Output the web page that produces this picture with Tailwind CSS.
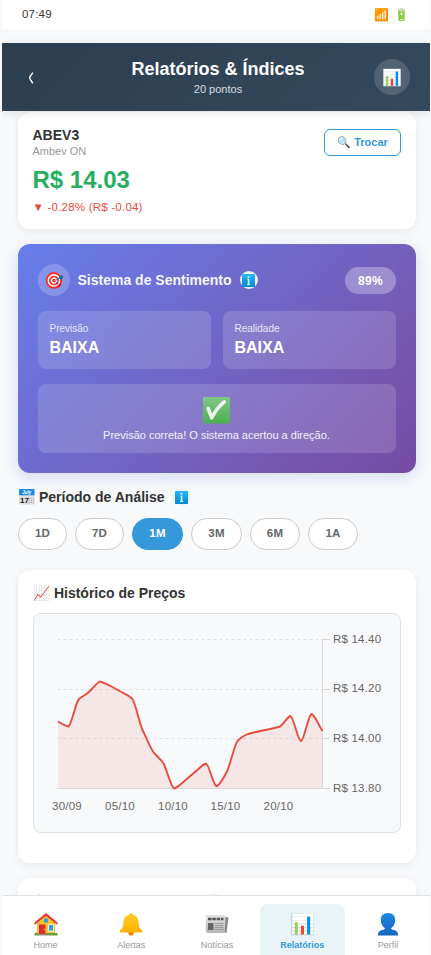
<!DOCTYPE html>
<html lang="pt-BR">
<head>
<meta charset="utf-8">
<meta name="viewport" content="width=device-width, initial-scale=1">
<title>Relatórios &amp; Índices</title>
<script src="https://cdn.jsdelivr.net/npm/@tailwindcss/browser@4"></script>
</head>
<body class="h-[955px] overflow-hidden bg-[#f8f9fb] font-['Liberation_Sans',Arial,sans-serif] text-[#333]">
<svg class="absolute" width="0" height="0" aria-hidden="true">
  <defs>
    <linearGradient id="infoFill" x1="0" y1="0" x2="0" y2="1"><stop offset="0" stop-color="#29b6f6"/><stop offset="1" stop-color="#0288d1"/></linearGradient>
    <linearGradient id="bellFill" x1="0" y1="0" x2="0" y2="1"><stop offset="0" stop-color="#ffca28"/><stop offset="1" stop-color="#ffb300"/></linearGradient>
    <linearGradient id="checkFill" x1="0" y1="0" x2="0" y2="1"><stop offset="0" stop-color="#81c784"/><stop offset="1" stop-color="#4caf50"/></linearGradient>
    <linearGradient id="paperFill" x1="0" y1="0" x2="0" y2="1"><stop offset="0" stop-color="#e4e4e4"/><stop offset="1" stop-color="#b5b5b5"/></linearGradient>
    <linearGradient id="userFill" x1="0" y1="0" x2="0" y2="1"><stop offset="0" stop-color="#1e88e5"/><stop offset="1" stop-color="#1565c0"/></linearGradient>
    <symbol id="info" viewBox="0 0 13 13"><rect width="13" height="13" rx=".8" fill="url(#infoFill)"/><path fill="#e3f5fd" d="M5.600 2h1.800v1.700h-1.800zM5.200 4.800h2.200v5.200h.7v1h-3v-1h.7V5.600h-.6z"/></symbol>
  </defs>
</svg>
<div class="relative ml-[2px] h-[955px] w-[428px] overflow-hidden">
  <div class="flex h-[29px] items-center justify-between bg-white pr-[21px] pl-5 text-[12px]">
    <span class="text-[11.5px] tracking-[0.2px]">07:49</span><span class="flex gap-[5px]"><span>📶</span><span>🔋</span></span>
  </div>
  <header class="relative z-10 mt-[14px] flex h-[68px] items-center justify-between bg-linear-135 from-[#2c3e50] to-[#34495e] px-5 text-white shadow-[0_2px_10px_rgba(0,0,0,0.1)]">
    <button class="flex h-9 w-9 items-center pt-[2px] pl-[6px]" aria-label="Voltar"><svg width="6" height="12" viewBox="0 0 6 12"><path fill="none" stroke="#fff" stroke-width="1.500" d="M4.800.6L1.700 5.200V6.400L4.800 11.300"/></svg></button>
    <div class="pt-px pl-1 text-center">
      <h1 class="text-[18px] leading-[21px] font-bold">Relatórios &amp; Índices</h1>
      <p class="mt-[3px] text-[11px] leading-[13px] text-white/80">20 pontos</p>
    </div>
    <div class="flex h-9 w-9 items-center justify-center rounded-full bg-white/15 pt-px text-[16px]">📊</div>
  </header>
  <main class="pr-[14px] pl-4">
    <section class="mt-px flex h-[117px] justify-between rounded-xl bg-white pr-[15px] pl-[14.5px] pt-[15px] shadow-[0_2px_8px_rgba(0,0,0,0.07)]">
      <div>
        <h2 class="text-[14px] leading-4 font-bold">ABEV3</h2>
        <p class="mt-[2px] text-[11px] leading-[13px] text-[#999]">Ambev ON</p>
        <p class="mt-[8px] text-[24px] leading-7 font-bold text-[#27ae60]">R$ 14.03</p>
        <p class="mt-[6px] text-[11.5px] leading-[14px] tracking-[0.22px] text-[#e74c3c]">▼ -0.28% (R$ -0.04)</p>
      </div>
      <button class="mt-[2px] flex h-[27px] w-[77px] items-center justify-center rounded-md border border-[#3498db] text-[11px] font-bold text-[#3498db]">🔍 Trocar</button>
    </section>

    <section class="mt-[15px] h-[229px] rounded-xl bg-linear-135 from-[#667eea] to-[#764ba2] p-5 text-white shadow-[0_4px_15px_rgba(102,126,234,0.25)]">
      <div class="flex h-8 items-center">
        <span class="flex h-8 w-8 items-center justify-center rounded-full bg-white/20 pt-px text-[16px]">🎯</span>
        <h2 class="ml-[7.5px] text-[14px] font-bold text-white/95">Sistema de Sentimento</h2>
        <span class="ml-2 flex h-[18px] w-[18px] items-center justify-center rounded-full bg-[#e8f4f8]"><svg width="13" height="13"><use href="#info"/></svg></span>
        <span class="ml-auto flex h-[27px] w-[51px] items-center justify-center rounded-full bg-white/30 pt-px text-[12px] font-bold tracking-[0.3px]">89%</span>
      </div>
      <div class="mt-[15px] grid grid-cols-2 gap-3">
        <div class="h-[58px] rounded-lg bg-white/15 px-[11.5px] pt-3"><p class="text-[10px] leading-3 text-white/80">Previsão</p><p class="mt-[3px] text-[16px] leading-[19px] font-bold">BAIXA</p></div>
        <div class="h-[58px] rounded-lg bg-white/15 px-[11.5px] pt-3"><p class="text-[10px] leading-3 text-white/80">Realidade</p><p class="mt-[3px] text-[16px] leading-[19px] font-bold">BAIXA</p></div>
      </div>
      <div class="mt-[15px] flex h-[69px] flex-col items-center rounded-lg bg-white/15 pt-[13px]">
        <svg class="mr-px" width="27" height="27" viewBox="0 0 27 27"><rect width="27" height="26.500" rx="1" fill="url(#checkFill)"/><path fill="none" stroke="#f0f3f0" stroke-width="3.600" stroke-linecap="round" stroke-linejoin="round" d="M5.200 11.500L8.800 20.800C12 14 16 9 21.300 4.800"/></svg>
        <p class="mt-[5px] mr-px text-[11px] leading-[13px] text-white/90">Previsão correta! O sistema acertou a direção.</p>
      </div>
    </section>

    <section class="pt-[15px]">
      <h2 class="flex h-[18px] items-center text-[14px] font-bold">
        <svg class="mr-[4px] ml-px" width="16" height="16" viewBox="0 0 16 16"><rect y="4" width="15.500" height="11.500" fill="#dedede"/><path fill="#1e88e5" d="M0 0h15.500v6.300H0z"/><text x="7.700" y="4.700" font-size="4.500" text-anchor="middle" font-style="italic" fill="#fff">July</text><text x="1" y="14.300" font-size="8" font-weight="bold" fill="#222">17</text><path stroke="#aaa" stroke-dasharray="1 1" d="M10 9.500h5M10 11.500h5M10 13.500h5"/></svg>
        <span>Período de Análise</span><span class="ml-2 flex h-[18px] w-[18px] items-center justify-center rounded-full bg-[#e8f4f8]"><svg width="13" height="13"><use href="#info"/></svg></span></h2>
      <div class="mt-3 flex gap-2 text-[11.5px] font-bold tracking-[0.2px] text-[#666]">
        <button class="h-8 w-[49px] rounded-full border border-[#ccc] bg-white">1D</button>
        <button class="h-8 w-[49px] rounded-full border border-[#ccc] bg-white">7D</button>
        <button class="h-8 w-[51px] rounded-full border border-[#3498db] bg-[#3498db] text-white">1M</button>
        <button class="h-8 w-[51px] rounded-full border border-[#ccc] bg-white">3M</button>
        <button class="h-8 w-[50px] rounded-full border border-[#ccc] bg-white">6M</button>
        <button class="h-8 w-[50px] rounded-full border border-[#ccc] bg-white">1A</button>
      </div>
    </section>

    <section class="mt-5 h-[293px] rounded-xl bg-white px-[15px] pt-[15px] shadow-[0_2px_8px_rgba(0,0,0,0.07)]">
      <h2 class="text-[14px] leading-4 font-bold">📈 Histórico de Preços</h2>
      <div class="mt-3 h-[220px] rounded-lg border border-[#dfe1e3] bg-[#f8f9fb]">
        <svg class="block" width="366" height="218" viewBox="0 0 366 218">
          <g stroke="#e0e0e0" stroke-dasharray="3 3"><path d="M23.5 25.5H288M23.5 75.5H288M23.5 124.5H288"/><path stroke="#ccc" d="M23.5 174.5H288"/></g>
          <path fill="#e74c3c" fill-opacity=".1" d="M24 107.5L34.5 112.5C38 105 42 91 45 85L55 78L66 67.5L98 84.5C102 91 105 107 108.500 115L119 137L129.500 149.500C132 153 137 170 140 174.500L172 149.500L182.500 172.500L193 157L203.500 127L214 120L246 112.500L256.500 102L267 127L277.500 100L288.500 117V174.500H24Z"/>
          <g fill="none" stroke="#d8d8d8"><path d="M23 174.500H296"/><path d="M288.500 25V175M288.500 25.500H296M288.500 75.500H296M288.500 124.500H296"/></g>
          <path fill="none" stroke="#e74c3c" stroke-width="1.900" stroke-linejoin="round" d="M24 107.500C27.500 109.500 31 112 34.500 112.500C38 109 41.500 89 45 85C48.500 82 52 81 55.500 77.500C59 74 62.500 69 66 67.500C69.500 68.200 73 70.500 76.500 72L87.500 78C91 80 94.500 81 98 84.500C101.500 89 105 107.500 108.500 116C112 123 115.500 132 119 137.500C122.500 142.500 126 144 129.500 149.500C133 156 136.500 172 140 174.500C143 174 147 169.500 150.500 167L161.500 157.500C165 155 168.500 150.500 172 149.500C175.500 151 179 171 182.500 172.300C186 171.500 189.500 164 193 157.500C196.500 150 200 132 203.500 127C207 123 210.500 121.500 214 120C224 117 236 115.500 246 112.500C249.500 110.500 253 103 256.500 102C260 104 263.500 126 267 127C270.500 126 274 101 277.500 100C281 101 285 112 288.500 117"/>
          <g fill="#666" font-size="11.500" letter-spacing=".2">
            <g><text x="299" y="29">R$ 14.40</text><text x="299" y="78">R$ 14.20</text><text x="299" y="128">R$ 14.00</text><text x="299" y="178">R$ 13.80</text></g>
            <g text-anchor="middle"><text x="33" y="196">30/09</text><text x="86" y="196">05/10</text><text x="139" y="196">10/10</text><text x="191.500" y="196">15/10</text><text x="244.500" y="196">20/10</text></g>
          </g>
        </svg>
      </div>
    </section>

    <section class="mt-[15px] flex h-[120px] rounded-xl bg-white px-[15px] pt-[15px] shadow-[0_2px_8px_rgba(0,0,0,0.07)]">
      <span class="mt-px ml-[4px] h-[4px] w-[4px] rounded-full bg-[#ddd]"></span><span class="ml-[164px] h-[18px] w-[18px] rounded-full bg-[#e8f4f8]"></span>
    </section>
  </main>
  <nav class="absolute right-0 bottom-0 left-px z-20 grid h-[60px] grid-cols-5 border-t border-[#dfe1e3] bg-white pt-2 pl-px text-[9px] leading-[11px] text-[#999]">
    <a class="flex h-[60px] flex-col items-center pt-[9px] pr-[2px]">
      <svg width="24" height="23" viewBox="0 0 24 23"><path fill="#fbc02d" d="M3 10L12 2.500L21 10V21H3z"/><path fill="#e53935" d="M12 0L.5 9.500V12L12 3L23.500 12V9.500z"/><path fill="#d32f2f" d="M5 11.500h6.500V21H5z"/><path fill="#fff3c0" d="M14 11h6v8h-6z"/><path fill="#29a3e0" d="M15 12h4v5.500h-4zM10 5.500h4v4h-4z"/><circle cx="10.300" cy="16.500" r=".7" fill="#ffd54f"/><path fill="#689f38" d="M.5 20.500c1-1.500 3-1.500 4 0v2H.5zM12 20h11.500v2.500H12z"/><path fill="#a1887f" d="M4 21h8v1.500H4z"/></svg>
      <span class="mt-[4px]">Home</span></a>
    <a class="flex h-[60px] flex-col items-center pt-[9px] pr-px">
      <svg width="24" height="23" viewBox="0 0 24 23"><circle cx="12" cy="2.200" r="1.900" fill="#f9a825"/><circle cx="12" cy="20" r="2.600" fill="#f57c00"/><path fill="url(#bellFill)" d="M12 1.500c5 0 7.200 3 7.500 7 .3 5 .6 6.800 3 8.200 1 .8 1.200 2.800-.3 2.800H1.800c-1.500 0-1.300-2-.3-2.800 2.400-1.400 2.700-3.200 3-8.200.3-4 2.500-7 7.500-7z"/><path fill="none" stroke="#f9a825" stroke-width=".8" d="M2 17.300h20"/></svg>
      <span class="mt-[4px]">Alertas</span></a>
    <a class="flex h-[60px] flex-col items-center pt-[9px]">
      <svg width="24" height="23" viewBox="0 0 24 23"><path fill="#8a8a8a" d="M18 3.500L23.500 4.500L21.500 20H4z"/><path fill="url(#paperFill)" d="M.8 2h19.700l-.6 16.500 1.200 1.500H3C1.500 20 .8 19 .8 17.500z"/><path stroke="#555" stroke-width="2.500" stroke-dasharray="3.500 .8" d="M3 6h15.500"/><path fill="#666" d="M3 10h5.500v7H3z"/><path stroke="#999" d="M10 10.500h8.500M10 12.500h8.500M10 14.500h8.500M10 16.500h8.500"/></svg>
      <span class="mt-[4px]">Notícias</span></a>
    <a class="flex h-[60px] flex-col items-center rounded-lg bg-[#e8f4f8] pt-[8px] font-bold text-[#3498db]"><span class="text-[20px] leading-[25px]">📊</span><span class="mt-[3px]">Relatórios</span></a>
    <a class="flex h-[60px] flex-col items-center pt-[9px] pl-px">
      <svg width="24" height="23" viewBox="0 0 24 23"><path fill="url(#userFill)" d="M12 0c5 0 7.200 3 7.200 7.200 0 3.300-1.700 6.500-4.200 8 .2 1.300 2.200 1.600 4.300 2.400 2 .8 2.700 2.200 2.700 4.900H2c0-2.700.7-4.100 2.700-4.900 2.100-.8 4.100-1.100 4.300-2.400-2.500-1.500-4.200-4.700-4.200-8C4.800 3 7 0 12 0z"/></svg>
      <span class="mt-[4px]">Perfil</span></a>
  </nav>
</div>
</body>
</html>
